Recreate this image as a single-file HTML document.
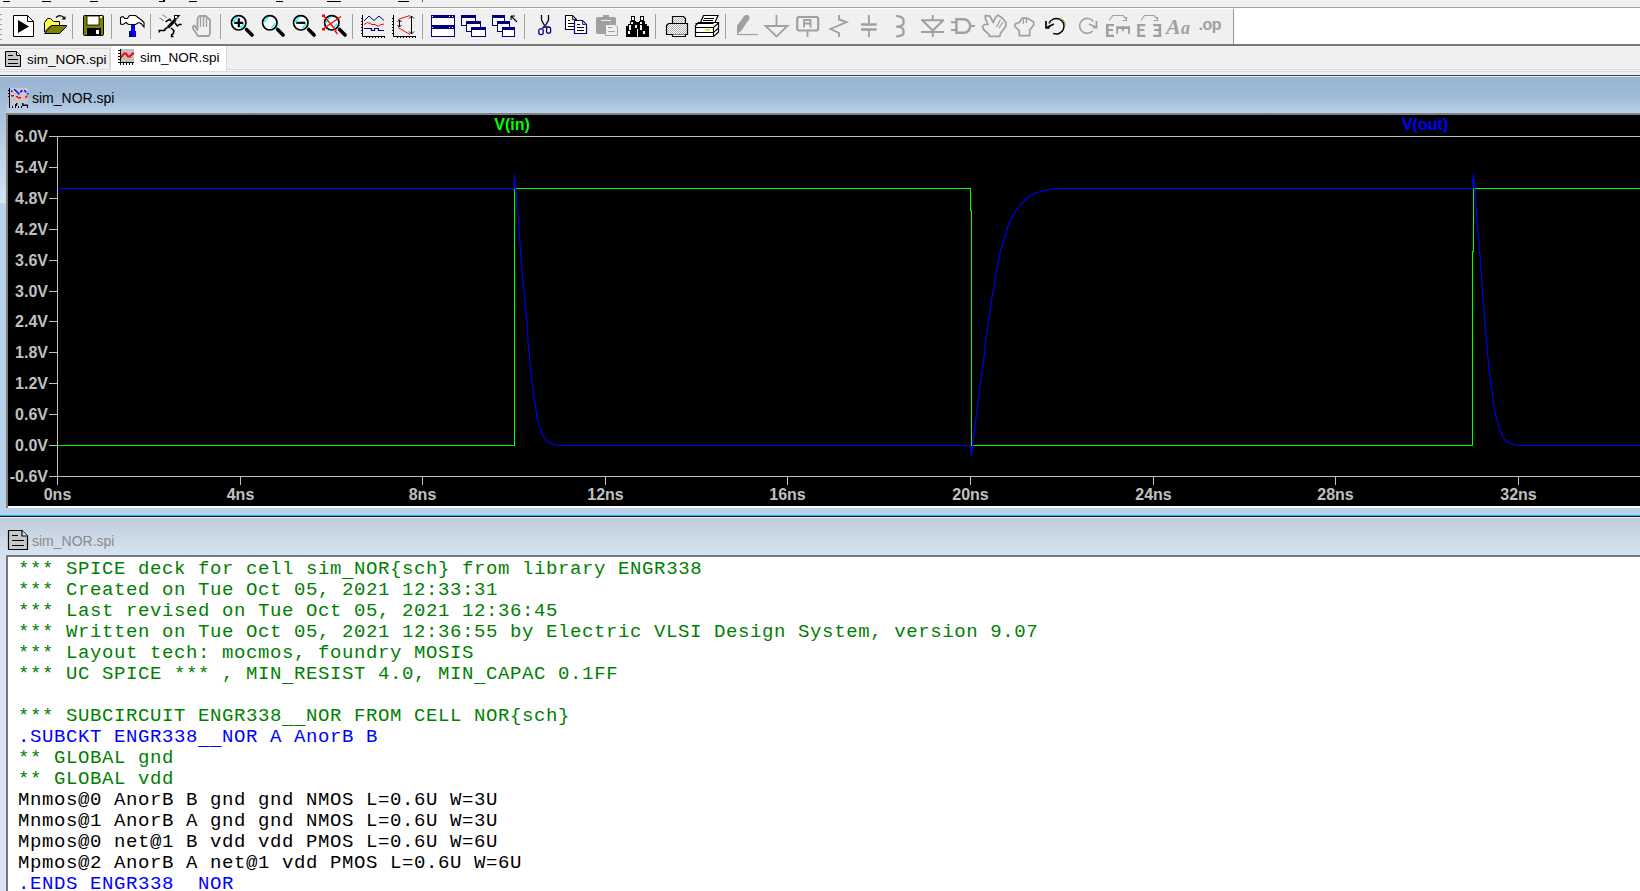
<!DOCTYPE html>
<html><head><meta charset="utf-8">
<style>
*{margin:0;padding:0;box-sizing:border-box}
html,body{width:1640px;height:891px;overflow:hidden;background:#f0f0f0;font-family:"Liberation Sans",sans-serif}
.a{position:absolute}
#menu div{position:absolute;top:1px;height:1px;background:#000}
#tb{position:absolute;left:0;top:7px;width:1640px;height:39px;border-top:1px solid #a0a0a0;border-bottom:2px solid #787878;background:#f0f0f0;box-shadow:inset 0 1px 0 #fff}
#tbw{position:absolute;left:1233px;top:8px;width:407px;height:36px;background:#fff}
#tbl{position:absolute;left:1233px;top:9px;width:1px;height:35px;background:#9a9a9a}
.sep{position:absolute;top:14px;width:1px;height:26px;background:#a0a0a0}
.tab{position:absolute;font-size:14px;color:#000}
#tabs{position:absolute;left:0;top:46px;width:1640px;height:29px}
.title{position:absolute;left:0;width:1640px}
pre{font-family:"Liberation Mono",monospace;font-size:19px;line-height:21px;letter-spacing:0.6px}
.u{font-style:normal;position:relative;top:3px}
.g{color:#008000}.b{color:#0000ff}.k{color:#000}
</style></head><body>
<div id="menu">
<div style="left:3px;width:7px"></div><div style="left:42px;width:9px"></div><div style="left:90px;width:8px"></div>
<div style="left:159px;width:6px"></div><div style="left:189px;width:8px"></div><div style="left:276px;width:7px"></div>
<div style="left:327px;width:14px"></div><div style="left:398px;width:11px"></div>
<div style="left:422px;width:1px;top:0;height:2px;background:#1a6fc4"></div>
<div style="left:163px;width:2px;top:0;height:1px"></div>
</div>
<div id="tb"></div>
<div id="tbw"></div><div id="tbl"></div>
<svg class="a" style="left:0;top:0" width="1640" height="46">
<g fill="#a0a0a0"><rect x="0" y="14" width="2" height="1"/><rect x="0" y="19" width="2" height="1"/><rect x="0" y="24" width="2" height="1"/><rect x="0" y="29" width="2" height="1"/><rect x="0" y="34" width="2" height="1"/><rect x="0" y="39" width="2" height="1"/></g>
<g fill="#a0a0a0"><rect x="72" y="14" width="1" height="25"/><rect x="111" y="14" width="1" height="25"/><rect x="150" y="14" width="1" height="25"/><rect x="220" y="14" width="1" height="25"/><rect x="352" y="14" width="1" height="25"/><rect x="422" y="14" width="1" height="25"/><rect x="524" y="14" width="1" height="25"/><rect x="655" y="14" width="1" height="25"/><rect x="725" y="14" width="1" height="25"/></g>
<!-- new/run -->
<path d="M13.5,15.5H27.5L33.5,21.5V36.5H13.5Z" fill="#fff" stroke="#000"/>
<path d="M27.5,15.5V21.5H33.5" fill="none" stroke="#000"/>
<path d="M18,20L29,26.5L18,33Z" fill="#000"/>
<!-- open -->
<path d="M44.5,22.5L47.5,18.5H50.5L53.5,21.5H59.5V25.5H51L44.5,32Z" fill="#ffff40" stroke="#000"/>
<path d="M44.5,33.5L51.5,25.5H66.5V26.5L59.5,33.5Z" fill="#808000" stroke="#000"/>
<path d="M56,17.5Q60,13.5 64.5,18" fill="none" stroke="#000" stroke-width="1.2"/>
<path d="M61.5,19.5H65.5V16Z" fill="#000"/>
<!-- save -->
<rect x="83.5" y="15.5" width="20" height="20" rx="1" fill="#808000" stroke="#000"/>
<rect x="87" y="16" width="12" height="9" fill="#fff" stroke="#000" stroke-width="0.8"/>
<rect x="100" y="16" width="2" height="2" fill="#fff"/>
<rect x="87" y="28" width="14" height="7" fill="#000"/>
<rect x="96" y="30" width="3" height="4" fill="#fff"/>
<!-- hammer -->
<path d="M120.5,17.5L123,16.5L124.5,18.5H127.5L129.5,15.5H135.5L142,20.5L144,22.5V27L141,23.5L138.5,22.5L135.5,24.5H128.5L126,22.5L123,24.5L120.5,24Z" fill="#fff" stroke="#000" stroke-width="1.1"/>
<rect x="131" y="25" width="4" height="6" fill="#0000ff"/>
<rect x="129" y="31" width="7" height="6" fill="#0000ff"/>
<rect x="129" y="31" width="3" height="6" fill="#000080"/>
<!-- run man -->
<path d="M174,15H180.5L176.5,19.5H174Z" fill="#000"/>
<rect x="175" y="16" width="2.2" height="2" fill="#fff"/>
<g stroke="#000" fill="none" stroke-linejoin="miter">
<path d="M175.5,19.5L168,27.5" stroke-width="3"/>
<path d="M165.6,21.8L169.5,19.3L171.3,21" stroke-width="1.5"/>
<path d="M174.9,22.7L177.3,26L179.3,24.4H181.7" stroke-width="1.5"/>
<path d="M167.6,27.3L165,29L164.6,30.5H159.3V32.6" stroke-width="1.6"/>
<path d="M171,28L173.9,30.5L173.4,33.4L171.6,34.9V36.5H173.5" stroke-width="1.6"/>
</g>
<path d="M162.2,15.2L163.5,15.2L166.6,17.6M159.3,18.3H160.5L163.7,20.7" stroke="#909090" stroke-width="1.1" fill="none"/>
<!-- gray hand -->
<path d="M197.5,30V18.5L199.5,16H205.5L210,20V34L208.5,36H198L193,28.5V26.5L194.5,25.5Z" fill="none" stroke="#a0a0a0" stroke-width="1.8" stroke-linejoin="round"/>
<path d="M200.5,17V27M203.5,16V27M206.5,17V27" stroke="#a0a0a0" stroke-width="1.4"/>
<!-- zoom in -->
<g>
<circle cx="238.7" cy="22.8" r="7.2" fill="#fff" stroke="#000" stroke-width="1.7"/>
<path d="M232.2,23L237.2,17M244.2,23.5L240.2,28" stroke="#00ffff" stroke-width="1.3" fill="none"/>
<path d="M246.5,29.5L252.0,35" stroke="#000" stroke-width="3.6" stroke-linecap="round"/>
<path d="M234.3,22.8H243.3M238.8,18.3V27.3" stroke="#000" stroke-width="2.2"/>
</g>
<g>
<circle cx="269.8" cy="22.8" r="7.2" fill="#fff" stroke="#000" stroke-width="1.7"/>
<path d="M263.3,23L268.3,17M275.3,23.5L271.3,28" stroke="#00ffff" stroke-width="1.3" fill="none"/>
<path d="M277.6,29.5L283.1,35" stroke="#000" stroke-width="3.6" stroke-linecap="round"/>

</g>
<g>
<circle cx="300.8" cy="22.8" r="7.2" fill="#fff" stroke="#000" stroke-width="1.7"/>
<path d="M294.3,23L299.3,17M306.3,23.5L302.3,28" stroke="#00ffff" stroke-width="1.3" fill="none"/>
<path d="M308.6,29.5L314.1,35" stroke="#000" stroke-width="3.6" stroke-linecap="round"/>
<path d="M296.3,22.8H305.3" stroke="#000" stroke-width="2.2"/>
</g>
<g>
<circle cx="331.8" cy="22.8" r="7.2" fill="#fff" stroke="#000" stroke-width="1.7"/>
<path d="M325.3,23L330.3,17M337.3,23.5L333.3,28" stroke="#00ffff" stroke-width="1.3" fill="none"/>
<path d="M339.6,29.5L345.1,35" stroke="#000" stroke-width="3.6" stroke-linecap="round"/>
<path d="M323,15L336.5,31M341,16.5L323,29M335,31L337.5,34" stroke="#ff0000" stroke-width="1.3"/><rect x="322" y="14.5" width="3" height="2.5" fill="#ff0000"/><rect x="322" y="28" width="3" height="2.5" fill="#ff0000"/>
</g>
<!-- chart1 -->
<g>
<path d="M362.5,15V36.5H385" stroke="#000" fill="none"/>
<path shape-rendering="crispEdges" d="M361,18H363M361,21H363M361,24H363M361,27H363M361,30H363M361,33H363M366.5,36V38M369.5,36V38M372.5,36V38M375.5,36V38M378.5,36V38M381.5,36V38M384.5,36V38" stroke="#000"/>
<path d="M364,21L369,16L374,20.5L379,16L384,20.5" stroke="#000080" fill="none"/>
<path d="M364,24.5L367.5,22.5L370,23.5L372,24.5H375L378,26.5L380,25L384,24" stroke="#ff0000" fill="none"/>
<path d="M364,28.5H371.5V30.5H374.5V28.5H378.5V30.5H384" stroke="#000080" fill="none" stroke-width="1.2"/>
</g>
<!-- chart2 -->
<g>
<path d="M393.5,15V36.5H416" stroke="#000" fill="none"/>
<path shape-rendering="crispEdges" d="M392,18H394M392,21H394M392,24H394M392,27H394M392,30H394M392,33H394M397.5,36V38M400.5,36V38M403.5,36V38M406.5,36V38M409.5,36V38M412.5,36V38M415.5,36V38" stroke="#000"/>
<path d="M398,19.5L410,15.5M398,27.5L410,34.5" stroke="#ff0000" fill="none"/>
<path d="M411.5,16V34M409,18.5L411.5,16L414,18.5M409,31.5L411.5,34L414,31.5M399.5,20V27M397.5,22L399.5,20L401.5,22M397.5,25L399.5,27L401.5,25" stroke="#000" fill="none"/>
</g>
<!-- tile horiz -->
<g>
<rect x="431.5" y="15.5" width="23" height="10" fill="#fff" stroke="#000080"/>
<rect x="431" y="15" width="24" height="3" fill="#000080"/>
<rect x="431.5" y="26.5" width="23" height="10" fill="#fff" stroke="#000080"/>
<rect x="431" y="26" width="24" height="3" fill="#000080"/>
<rect x="432" y="16" width="1" height="1" fill="#fff"/><rect x="449" y="16" width="1" height="1" fill="#fff"/><rect x="452" y="16" width="1" height="1" fill="#fff"/>
<rect x="432" y="27" width="1" height="1" fill="#fff"/><rect x="449" y="27" width="1" height="1" fill="#fff"/><rect x="452" y="27" width="1" height="1" fill="#fff"/>
</g>
<!-- cascade -->
<g>
<rect x="461.5" y="15.5" width="14" height="10" fill="#fff" stroke="#000080"/><rect x="461" y="15" width="15" height="3" fill="#000080"/>
<rect x="466.5" y="21.5" width="14" height="10" fill="#fff" stroke="#000080"/><rect x="466" y="21" width="15" height="3" fill="#000080"/>
<rect x="471.5" y="27.5" width="14" height="9" fill="#fff" stroke="#000080"/><rect x="471" y="27" width="15" height="3" fill="#000080"/>
</g>
<g>
<rect x="492.5" y="15.5" width="12" height="10" fill="#fff" stroke="#000080"/><rect x="492" y="15" width="13" height="3" fill="#000080"/>
<rect x="497.5" y="21.5" width="12" height="10" fill="#fff" stroke="#000080"/><rect x="497" y="21" width="13" height="3" fill="#000080"/>
<rect x="502.5" y="27.5" width="12" height="9" fill="#fff" stroke="#000080"/><rect x="502" y="27" width="13" height="3" fill="#000080"/>
<path d="M511,16L517,22M511,16H515M511,16V20" stroke="#000" fill="none" stroke-width="1.1"/>
</g>
<!-- scissors -->
<g>
<path d="M541.5,15V20L544.5,25.5M548.5,15V20L545.5,25.5" stroke="#000" fill="none" stroke-width="1.3"/>
<path d="M545,25V28" stroke="#000080" stroke-width="1.6"/>
<path d="M544,26.5L542.5,28.5M546,26.5L547.5,27" stroke="#000080" stroke-width="1.3"/>
<rect x="538.8" y="28.8" width="4.4" height="5.8" rx="2" fill="#fff" stroke="#000080" stroke-width="1.3"/>
<rect x="546.6" y="27" width="4" height="6.2" rx="2" fill="#fff" stroke="#000080" stroke-width="1.3"/>
</g>
<!-- copy -->
<g>
<path d="M565.5,15.5H572.5L576.5,19.5V29.5H565.5Z" fill="#fff" stroke="#000" stroke-width="1.1"/>
<path d="M572.5,15.5V19.5H576.5Z" fill="#c0c0c0" stroke="#000" stroke-width="0.8"/>
<path d="M568,20.5H570M568,23.5H575M568,26.5H575" stroke="#000"/>
<path d="M574.5,20.5H582.5L586.5,24.5V33.5H574.5Z" fill="#fff" stroke="#000080" stroke-width="1.2"/>
<path d="M582.5,20.5V24.5H586.5Z" fill="#c0c0c0" stroke="#000080" stroke-width="0.8"/>
<path d="M577,24.5H580M577,27.5H584M577,30.5H584" stroke="#000"/>
</g>
<!-- paste gray -->
<defs><pattern id="chk" width="2" height="2" patternUnits="userSpaceOnUse"><rect width="2" height="2" fill="#fff"/><rect width="1" height="1" fill="#b0b0b0"/><rect x="1" y="1" width="1" height="1" fill="#b0b0b0"/></pattern></defs>
<g>
<rect x="596" y="17" width="20" height="17" rx="2" fill="#a0a0a0"/>
<rect x="603" y="15" width="6" height="3" fill="#a0a0a0"/>
<rect x="601" y="20" width="10" height="1" fill="#f0f0f0"/>
<path d="M605.5,24.5H615L617.5,27V35.5H605.5Z" fill="#f0f0f0" stroke="#a0a0a0"/>
<path d="M608,27.5H612M608,31.5H615" stroke="#a0a0a0"/>
</g>
<!-- binoculars -->
<g fill="#000" shape-rendering="crispEdges">
<rect x="631" y="16" width="4" height="6"/><rect x="640" y="16" width="4" height="6"/>
<rect x="630" y="21" width="6" height="5"/><rect x="639" y="21" width="6" height="5"/>
<rect x="626" y="26" width="11" height="11"/><rect x="638" y="26" width="11" height="11"/>
<rect x="628" y="24" width="3" height="3"/><rect x="644" y="24" width="3" height="3"/>
<rect x="636" y="22" width="3" height="7"/>
</g>
<g fill="#fff" shape-rendering="crispEdges"><rect x="632" y="17" width="2" height="3"/><rect x="641" y="17" width="2" height="3"/><rect x="631" y="22" width="2" height="2"/><rect x="640" y="22" width="2" height="2"/><rect x="629" y="25" width="2" height="5"/><rect x="635" y="25" width="2" height="3"/><rect x="640" y="25" width="2" height="5"/><rect x="628" y="31" width="2" height="3"/><rect x="643" y="31" width="2" height="3"/></g>
<!-- printer1 -->
<g>
<path d="M672.5,16.5H683.5L685.5,18.5V23.5H672.5Z" fill="url(#chk)" stroke="#000" stroke-width="1.2"/>
<path d="M668.5,23.5H687.5V34.5H666.5V25.5Z" fill="url(#chk)" stroke="#000" stroke-width="1.2"/>
<path d="M672.5,34.5V36.5H685.5V34.5" fill="#fff" stroke="#000" stroke-width="1.2"/>
</g>
<!-- printer2 -->
<g>
<path d="M703.5,15.5H718L715,22.5H700.5Z" fill="#fff" stroke="#000" stroke-width="1.2"/>
<path d="M704,18.5H714M703,20.5H713" stroke="#000"/>
<path d="M698.5,22.5H718.5V32L713.5,36.5H695.5V25.5Z" fill="#fff" stroke="#000" stroke-width="1.2"/>
<path d="M695.5,27.5H713.5L718.5,23M695.5,32.5H713.5L718.5,28M713.5,27.5V36.5" stroke="#000" fill="none" stroke-width="1.1"/>
<path d="M695.5,23.5H713.5" stroke="#000" fill="none" stroke-width="1"/>
<rect x="705" y="29" width="5" height="1.5" fill="#e0e000"/>
</g>
<!-- gray schematic tools -->
<g stroke="#a0a0a0" fill="none">
<path d="M737,34.5H758" stroke-width="1.2"/>
<path d="M737,35V25.5L741,20.5L744,16L745.5,15H748L749.5,16.5V19L746,23.5L743,28.5L740.5,31.5L737.5,34Z" fill="#a0a0a0" stroke="none"/>
<path d="M776.5,15V25.5" stroke-width="1.8"/>
<path d="M765.5,26H787.5L776.5,36.5Z" stroke-width="1.8" stroke-linejoin="miter"/>
<path d="M798.5,17L797.2,18.3V29.2L798.5,30.5H817L818.2,29.2V18.3L817,17Z" stroke-width="2.2"/>
<path d="M807.5,31V37" stroke-width="1.8"/>
<path d="M804,27.5V20H810.5V27.5M804,23.5H810.5" stroke-width="1.8"/>
<path d="M839,15V19.5L846.5,22L830.5,29L839,33V37" stroke-width="1.9" stroke-linejoin="miter"/>
<path d="M868.9,15V23.5M868.9,30V37" stroke-width="1.9"/>
<path d="M861,24.4H876.7M861,29.5H876.7" stroke-width="2.5"/>
<path d="M896.2,15.8Q903.5,16.5 903.5,20.5V23Q903.5,26.5 896.2,26.6Q903.5,27 903.5,30.5V33Q903.5,36 896.2,36.3" stroke-width="2.3"/>
<path d="M932.8,15V20M932.8,32V37" stroke-width="1.9"/>
<path d="M921,20.2H944M922.5,20.5L932.8,30.5L943,20.5M921,32H944" stroke-width="2"/>
<path d="M951,22.2H956M951,30H956M970,26H975" stroke-width="2"/>
<path d="M956.4,19.2H963.5Q969.5,19.5 970.3,26Q969.5,32.8 963.5,32.8H956.4Z" stroke-width="2.4"/>
<path d="M989.2,36.4H999.9L1000.3,33.8L1005.9,26V22.6L1002.6,18.2L998.1,15.2L995.5,17.4L993.3,22.6L989.9,16L985.4,15.6V18.9L988,24.5H984.3L982.5,27.1L984,30L989.2,34.6Z" stroke-width="1.7" stroke-linejoin="round"/>
<path d="M996.5,27L1000.5,19.5M999,28L1003,22" stroke-width="1.2"/>
<path d="M1019.3,35.7H1029.7V30L1033.8,24.9V21.9L1030,19.7L1027.1,18.2H1021.9L1020,21.9L1015.2,24.1L1014.5,26L1019.3,30.8Z" stroke-width="1.7" stroke-linejoin="round"/>
<path d="M1023.4,18.5V24M1026.4,18.5V23" stroke-width="1.3"/>
</g>
<!-- undo -->
<path d="M1049,23.4A7.8,7.8 0 1 1 1053.1,33.4" fill="none" stroke="#000" stroke-width="1.5"/>
<path d="M1059,18.5A7.8,7.8 0 0 1 1065.2,25" fill="none" stroke="#a09000" stroke-width="1.2"/>
<path d="M1046,21V28H1049.5M1046,28L1053.8,24" fill="none" stroke="#000" stroke-width="1.7"/>
<!-- redo gray -->
<path d="M1092.6,31A7.5,7.5 0 1 1 1093.2,21.5" fill="none" stroke="#a0a0a0" stroke-width="1.6"/>
<path d="M1096.5,21V27.5H1093M1096.5,27.5L1089,24" fill="none" stroke="#a0a0a0" stroke-width="1.8"/>
<!-- E m rotate -->
<g stroke="#a0a0a0" fill="none" stroke-width="1.2">
<path d="M1109,20.5L1113,15.5H1123L1126.5,19M1122.5,20.5H1126.5V17"/>
<path d="M1141,20.5L1144.5,15.5H1154L1157.5,19M1153.5,20.5H1157.5V17"/>
</g>
<g fill="#a0a0a0">
<rect x="1106" y="24" width="2.5" height="13"/><rect x="1106" y="24" width="8" height="2.2"/><rect x="1106" y="29" width="7" height="2"/><rect x="1106" y="34.7" width="8" height="2.3"/>
<rect x="1116.3" y="26.3" width="13.7" height="2.7"/><rect x="1116.3" y="26.3" width="1.8" height="7.5"/><rect x="1121.8" y="26.3" width="2" height="5"/><rect x="1128" y="26.3" width="2" height="7.5"/>
<rect x="1137.3" y="24" width="2.5" height="13"/><rect x="1137.3" y="24" width="8" height="2.2"/><rect x="1137.3" y="29" width="7" height="2"/><rect x="1137.3" y="34.7" width="8" height="2.3"/>
<rect x="1158.6" y="24" width="2.5" height="13"/><rect x="1153.2" y="24" width="8" height="2.2"/><rect x="1154.2" y="29" width="7" height="2"/><rect x="1153.2" y="34.7" width="8" height="2.3"/>
</g>
<text x="1166" y="34" font-family="Liberation Serif" font-weight="bold" font-style="italic" font-size="22" fill="#a0a0a0">A</text>
<text x="1181" y="34" font-family="Liberation Serif" font-style="italic" font-weight="bold" font-size="18" fill="#a0a0a0">a</text>
<text x="1198.5" y="30" font-family="Liberation Sans" font-weight="bold" font-size="16" fill="#a0a0a0" letter-spacing="-0.5">.op</text>
</svg>


<!-- tabs -->
<div id="tabs">
  <div class="a" style="left:0;top:2px;width:110px;height:22px;background:#f0f0f0;border-top:1px solid #dcdcdc;border-right:1px solid #d9d9d9"></div>
  <div class="a" style="left:0;top:23px;width:1640px;height:1px;background:#d9d9d9"></div>
  <div class="a" style="left:0;top:24px;width:1640px;height:1px;background:#f8f8f8"></div>
  <div class="a" style="left:0;top:25px;width:1640px;height:1px;background:#dcdcdc"></div>
  <div class="a" style="left:110px;top:0;width:117px;height:25px;background:#fff;border-left:1px solid #d9d9d9;border-right:1px solid #d9d9d9"></div>
  <div class="tab" style="left:27px;top:6px;font-size:13.5px">sim_NOR.spi</div>
  <div class="tab" style="left:140px;top:4px;font-size:13.5px">sim_NOR.spi</div>
  <svg class="a" style="left:0;top:0" width="240" height="26">
   <path d="M5.5,5.5H16.5L20.5,9.5V20.5H5.5Z" fill="#c8c8c8" stroke="#000"/>
   <path d="M16.5,5.5V9.5H20.5" fill="#f0f0f0" stroke="#000"/>
   <path d="M8,9.5H13M8,13.5H18M8,17.5H18" stroke="#000"/>
   <rect x="121" y="3" width="13" height="13" fill="#c0c0c0"/>
   <path d="M120.5,3V19M118,4.5H120M118,7.5H120M118,10.5H120M118,13.5H120M118,16.5H120M123.5,16V19M126.5,16V19M129.5,16V19M132.5,16V19M120,16.5H134" stroke="#000" shape-rendering="crispEdges"/>
   <path d="M121,11.5L124,7.5H126L128,10.5H130L132,8L134,7" stroke="#ff0000" stroke-width="2" fill="none"/>
  </svg>
</div>

<!-- MDI plot window -->
<div class="a" style="left:0;top:75px;width:1640px;height:1px;background:#404040"></div>
<div class="a" style="left:0;top:76px;width:1640px;height:1px;background:#e8eef6"></div>
<div class="a" style="left:0;top:77px;width:1640px;height:438px;background:linear-gradient(#99b4d1 0px,#a0bbd8 20px,#b9d1ea 36px,#b9d1ea 100%)"></div>
<div class="a" style="left:0;top:77px;width:6px;height:126px;background:linear-gradient(#99b4d1,#d8e5f3)"></div>
<div class="a" style="left:32px;top:90px;font-size:14px;color:#000">sim_NOR.spi</div>
<svg class="a" style="left:0;top:80px" width="40" height="32">
 <rect x="9" y="8" width="19" height="20" fill="#c8c8c8"/>
 <path d="M9.5,8V28M8,10.5H9M8,13.5H9M8,16.5H9M12.5,26V28M15.5,26V28M18.5,26V28M21.5,26V28M27.5,26V28" stroke="#000" stroke-width="1" shape-rendering="crispEdges"/>
 <g fill="#0000ff"><rect x="11" y="10.5" width="1.5" height="1.5"/><rect x="14" y="9" width="1.5" height="1.5"/><rect x="15" y="10" width="1.5" height="1.5"/><rect x="16" y="11" width="1.5" height="1.5"/><rect x="17" y="12" width="1.5" height="1.5"/><rect x="18" y="13" width="1.5" height="1.5"/><rect x="20" y="11" width="1.5" height="1.5"/><rect x="21" y="10" width="1.5" height="1.5"/><rect x="24" y="10" width="1.5" height="1.5"/><rect x="25" y="11" width="1.5" height="1.5"/><rect x="27" y="13" width="1.5" height="1.5"/></g>
 <g fill="#ff0000"><rect x="11" y="15" width="3" height="1.5"/><rect x="16" y="16" width="2" height="1.5"/><rect x="18" y="17" width="3" height="1.5"/><rect x="25" y="16.5" width="1.5" height="1.5"/><rect x="26" y="15.5" width="1.5" height="1.5"/></g>
 <g fill="#000080"><rect x="15" y="24" width="2" height="2"/><rect x="16" y="23" width="1.5" height="1.5"/><rect x="22" y="23" width="1.5" height="3"/><rect x="23" y="24.5" width="5" height="1.5"/></g>
</svg>
<div class="a" style="left:6px;top:113px;width:1634px;height:395px;background:#fff;border-left:2px solid #808080;border-top:2px solid #808080"></div>
<div class="a" style="left:8px;top:115px;width:1632px;height:391px;background:#000"></div>
<svg class="a" style="left:0;top:0" width="1640" height="510">
<path d="M57,136.5H1640M57,476.5H1640M57.5,136V485M49,136.5H57M49,167.5H57M49,198.5H57M49,229.5H57M49,260.5H57M49,291.5H57M49,321.5H57M49,352.5H57M49,383.5H57M49,414.5H57M49,445.5H57M49,476.5H57M240.5,476V485M422.5,476V485M605.5,476V485M787.5,476V485M970.5,476V485M1153.5,476V485M1335.5,476V485M1518.5,476V485" stroke="#c0c0c0" fill="none" shape-rendering="crispEdges"/>
<g font-family="Liberation Sans" font-weight="bold" font-size="16" fill="#c0c0c0">
<text x="48" y="142" text-anchor="end">6.0V</text>
<text x="48" y="173" text-anchor="end">5.4V</text>
<text x="48" y="204" text-anchor="end">4.8V</text>
<text x="48" y="235" text-anchor="end">4.2V</text>
<text x="48" y="266" text-anchor="end">3.6V</text>
<text x="48" y="297" text-anchor="end">3.0V</text>
<text x="48" y="327" text-anchor="end">2.4V</text>
<text x="48" y="358" text-anchor="end">1.8V</text>
<text x="48" y="389" text-anchor="end">1.2V</text>
<text x="48" y="420" text-anchor="end">0.6V</text>
<text x="48" y="451" text-anchor="end">0.0V</text>
<text x="48" y="482" text-anchor="end">-0.6V</text>
<text x="57.5" y="500" text-anchor="middle">0ns</text>
<text x="240.5" y="500" text-anchor="middle">4ns</text>
<text x="422.5" y="500" text-anchor="middle">8ns</text>
<text x="605.5" y="500" text-anchor="middle">12ns</text>
<text x="787.5" y="500" text-anchor="middle">16ns</text>
<text x="970.5" y="500" text-anchor="middle">20ns</text>
<text x="1153.5" y="500" text-anchor="middle">24ns</text>
<text x="1335.5" y="500" text-anchor="middle">28ns</text>
<text x="1518.5" y="500" text-anchor="middle">32ns</text>
</g>
<path d="M57,445.5H514.5V188.5H970.5V210.5H971.5V445.5H1472.5V251.5H1473.5V188.5H1640" stroke="#00ff00" fill="none" shape-rendering="crispEdges"/>
<path d="M57.5,188.5 L514.0,188.5 L514.5,174.5 L515.0,188.5 L515.5,188.5 L516.5,196.5 L517.5,209.5 L518.5,220.5 L519.5,238.5 L520.5,251.5 L521.5,263.5 L522.5,274.5 L523.5,285.5 L524.5,296.5 L525.5,306.5 L526.5,317.5 L527.5,330.5 L528.5,346.5 L529.5,358.5 L530.5,368.5 L531.5,377.5 L532.5,385.5 L533.5,393.5 L534.5,400.5 L535.5,405.5 L536.5,414.5 L537.5,418.5 L539.0,424.5 L540.5,428.5 L542.5,434.5 L544.5,437.5 L546.5,440.5 L548.5,442.0 L552.5,443.9 L554.5,444.7 L561.5,445.5 L970.5,445.5 L971.5,455.5 L972.5,445.5 L973.5,438.5 L974.5,431.5 L975.5,422.5 L976.5,414.5 L977.5,405.5 L978.5,398.5 L979.5,390.5 L980.5,382.5 L981.5,376.5 L982.5,368.5 L984.0,357.5 L985.5,341.5 L987.5,328.5 L989.5,314.5 L991.5,299.5 L993.5,289.5 L995.5,276.5 L997.5,266.5 L999.5,255.5 L1001.5,247.5 L1003.5,240.5 L1005.5,235.5 L1007.5,227.5 L1009.5,222.5 L1012.5,216.5 L1016.5,209.5 L1020.5,204.5 L1024.5,200.5 L1026.5,198.5 L1030.5,195.5 L1035.5,193.0 L1042.5,191.0 L1049.5,189.5 L1058.5,188.5 L1472.5,188.5 L1473.5,174.5 L1474.5,188.5 L1475.5,200.5 L1476.5,213.5 L1477.5,227.5 L1478.5,238.5 L1479.9,253.5 L1481.7,277.5 L1483.5,305.5 L1485.2,325.5 L1487.0,347.5 L1488.8,366.5 L1490.5,380.5 L1492.0,390.5 L1493.5,402.5 L1494.5,408.5 L1495.5,413.5 L1497.0,420.5 L1498.5,424.5 L1499.5,428.5 L1501.0,431.5 L1502.5,436.5 L1504.5,439.5 L1509.0,442.9 L1514.5,444.5 L1518.5,445.5 L1640.5,445.5" stroke="#0000ff" fill="none" stroke-width="1.1" stroke-linejoin="round"/>
<text x="512" y="130" text-anchor="middle" font-family="Liberation Sans" font-weight="bold" font-size="16" fill="#00ff00">V(in)</text>
<text x="1425" y="130" text-anchor="middle" font-family="Liberation Sans" font-weight="bold" font-size="16" fill="#0000ff">V(out)</text>
</svg>

<!-- second window -->
<div class="a" style="left:0;top:515px;width:1640px;height:1px;background:#1ab0e0"></div>
<div class="a" style="left:0;top:516px;width:1640px;height:1px;background:#202020"></div><div class="a" style="left:0;top:517px;width:1640px;height:1px;background:#e6edf5"></div>
<div class="a" style="left:0;top:518px;width:1640px;height:373px;background:linear-gradient(#bfcddb 0px,#d7e4f2 38px,#d7e4f2 100%)"></div>
<div class="a" style="left:32px;top:533px;font-size:14px;color:#8a8a8a">sim_NOR.spi</div>
<svg class="a" style="left:0;top:520px" width="40" height="36">
 <path d="M8.5,10.5H22L27.5,16V29.5H8.5Z" fill="#c8c8c8" stroke="#000" stroke-width="1.2"/>
 <path d="M22,10.5V16H27.5" fill="#e0e8f0" stroke="#000" stroke-width="1.2"/>
 <path d="M12,15.5H18M12,20.5H24M12,25.5H24" stroke="#000" stroke-width="1.2"/>
</svg>
<div class="a" style="left:6px;top:555px;width:1634px;height:336px;background:#fff;border-left:2px solid #787878;border-top:2px solid #787878"></div>
<pre class="a" style="left:18px;top:559px"><span class="g">*** SPICE deck for cell sim<i class="u">_</i>NOR{sch} from library ENGR338
*** Created on Tue Oct 05, 2021 12:33:31
*** Last revised on Tue Oct 05, 2021 12:36:45
*** Written on Tue Oct 05, 2021 12:36:55 by Electric VLSI Design System, version 9.07
*** Layout tech: mocmos, foundry MOSIS
*** UC SPICE *** , MIN<i class="u">_</i>RESIST 4.0, MIN<i class="u">_</i>CAPAC 0.1FF

*** SUBCIRCUIT ENGR338<i class="u">_</i><i class="u">_</i>NOR FROM CELL NOR{sch}</span>
<span class="b">.SUBCKT ENGR338<i class="u">_</i><i class="u">_</i>NOR A AnorB B</span>
<span class="g">** GLOBAL gnd
** GLOBAL vdd</span>
<span class="k">Mnmos@0 AnorB B gnd gnd NMOS L=0.6U W=3U
Mnmos@1 AnorB A gnd gnd NMOS L=0.6U W=3U
Mpmos@0 net@1 B vdd vdd PMOS L=0.6U W=6U
Mpmos@2 AnorB A net@1 vdd PMOS L=0.6U W=6U</span>
<span class="b">.ENDS ENGR338<i class="u">_</i><i class="u">_</i>NOR</span></pre>
</body></html>
